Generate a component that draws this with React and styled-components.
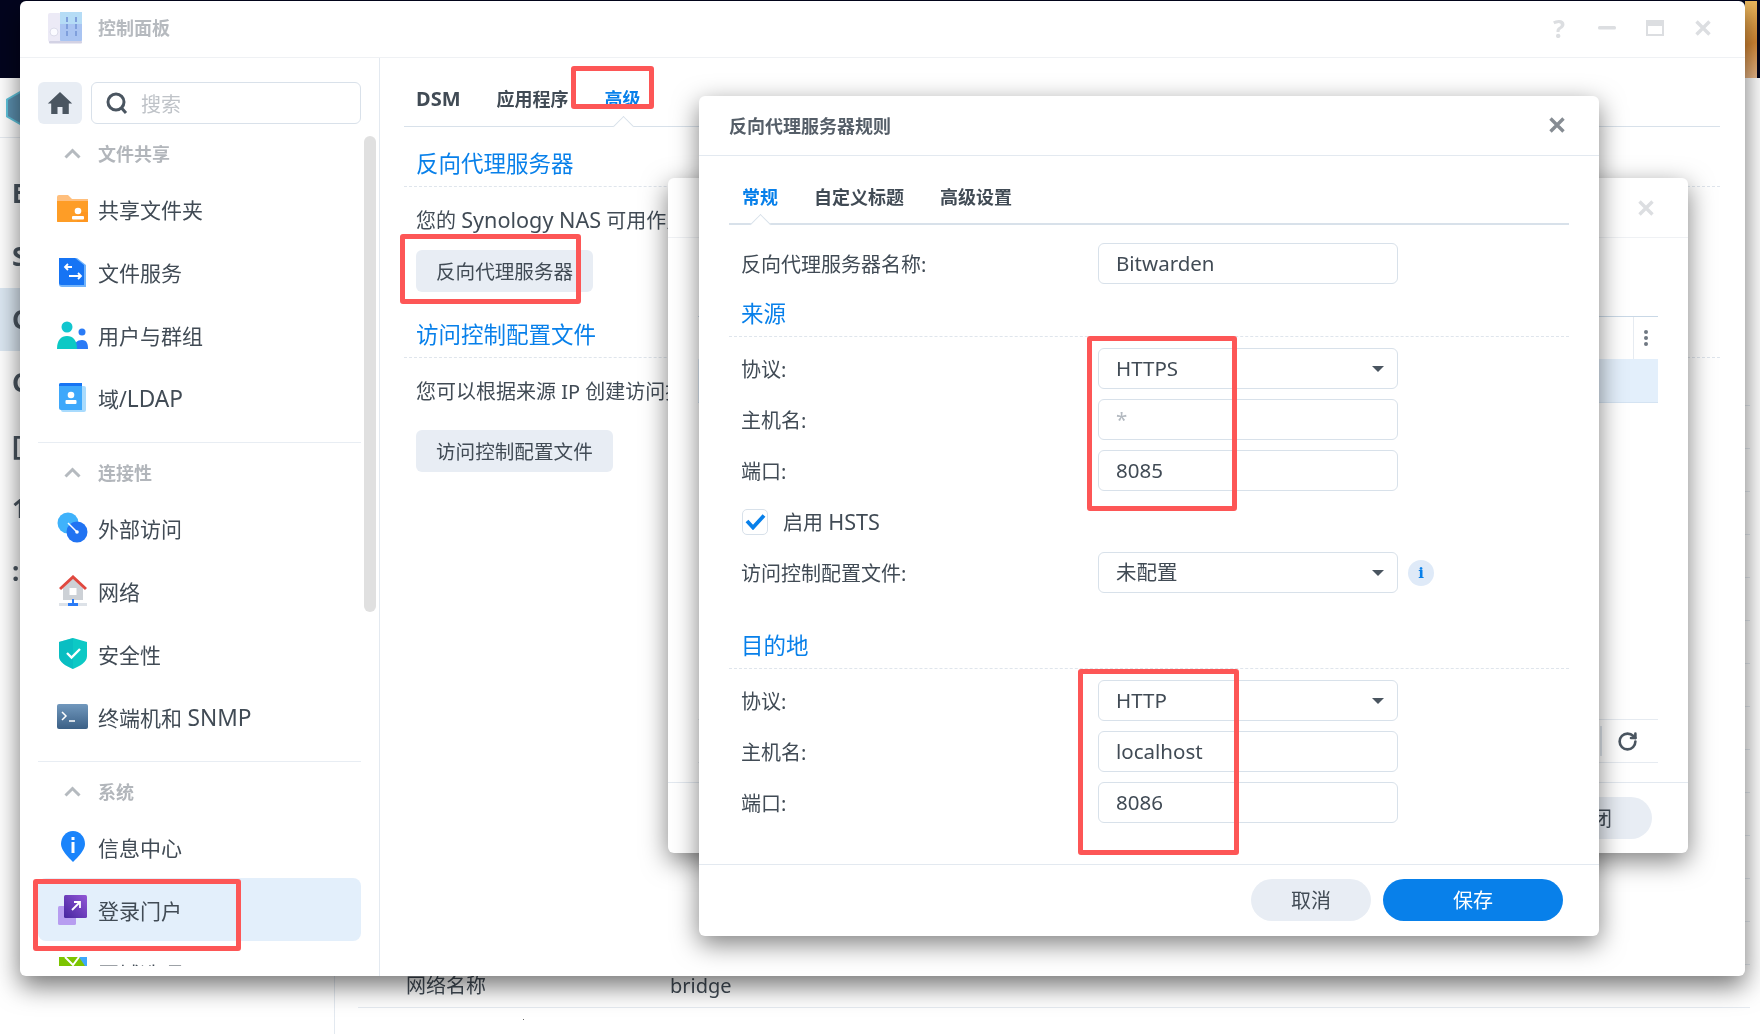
import React from 'react';
import styled, { createGlobalStyle, css } from 'styled-components';
import { RotateCw } from 'lucide-react';

const GlobalStyle = createGlobalStyle`
  html, body { margin: 0; padding: 0; background: #fff; }
  body {
    font-family: "Noto Sans", "Noto Sans CJK SC", sans-serif;
    color: #414b55;
  }
  * { box-sizing: border-box; }
`;

const Desktop = styled.div`
  position: relative;
  width: 1760px;
  height: 1034px;
  overflow: hidden;
  background: #03051e;
  filter: blur(0.35px);
`;

const Wallpaper = styled.div`
  position: absolute;
  left: 1745px;
  top: 1px;
  width: 12px;
  height: 77px;
  background: linear-gradient(160deg, #eebc62 0%, #d98a35 55%, #e9b98c 100%);
`;

/* latin runs are drawn a bit larger than the chinese around them */
const Latin = styled.span`
  font-size: 1.08em;
  line-height: 0;
`;

/* the app behind the control panel, only its edges show */
const BackApp = styled.div`
  position: absolute;
  left: 0;
  top: 78px;
  width: 1760px;
  height: 956px;
  background: #fff;
  display: flex;
`;

const BackSide = styled.div`
  width: 335px;
  border-right: 1px solid #e3e9f0;
  display: flex;
  flex-direction: column;
`;

const BackLogoRow = styled.div`
  height: 60px;
  border-bottom: 1px solid #e6ebf1;
  display: flex;
  align-items: center;
  padding-left: 4px;
`;

const BackSideItem = styled.div`
  height: 63px;
  padding-left: 12px;
  font-size: 26px;
  font-weight: 700;
  line-height: 63px;
  color: #4a5560;
  background: ${p => (p.$active ? '#dce8f3' : 'transparent')};
`;

const BackSideList = styled.div`
  margin-top: 24px;
`;

const BackMain = styled.div`
  flex: 1;
  padding: 285px 10px 0 23px;
`;

const BackRow = styled.div`
  height: 43px;
  border-bottom: 1px solid #e6ebf1;
  display: flex;
  align-items: center;
  font-size: 20px;
  line-height: 30px;
  padding-left: 48px;
`;

const BackRowKey = styled.span`
  width: 264px;
`;

const Speck = styled.div`
  position: absolute;
  left: 523px;
  top: 1019px;
  width: 1px;
  height: 1px;
  background: #666;
`;

/* control panel window */
const PanelWindow = styled.div`
  position: absolute;
  left: 20px;
  top: 1px;
  width: 1725px;
  height: 975px;
  background: #fff;
  border-radius: 6px;
  box-shadow: 0 10px 26px rgba(0, 0, 0, 0.55);
  display: flex;
  flex-direction: column;
`;

const TitleBar = styled.div`
  height: 57px;
  flex: none;
  border-bottom: 1px solid #eff1f4;
  display: flex;
  align-items: center;
  padding: 0 18px 2px 28px;
`;

const TitleText = styled.div`
  margin-left: 16px;
  font-size: 18px;
  line-height: 24px;
  font-weight: 700;
  color: #b6babf;
  flex: 1;
`;

const WindowControls = styled.div`
  display: flex;
  align-items: center;
`;

const ControlCell = styled.div`
  width: 48px;
  height: 30px;
  display: flex;
  align-items: center;
  justify-content: center;
  font-size: 25px;
  font-weight: 700;
  color: #dcdee1;
`;

const PanelBody = styled.div`
  flex: 1;
  min-height: 0;
  display: flex;
`;

const Sidebar = styled.div`
  position: relative;
  width: 360px;
  flex: none;
  border-right: 1px solid #e3e9f0;
  padding: 24px 18px 10px;
  display: flex;
  flex-direction: column;
`;

const SearchRow = styled.div`
  display: flex;
  gap: 9px;
  height: 42px;
  flex: none;
`;

const HomeButton = styled.div`
  width: 44px;
  background: #e8edf4;
  border-radius: 6px;
  display: flex;
  align-items: center;
  justify-content: center;
`;

const SearchBox = styled.div`
  flex: 1;
  border: 1px solid #d9e1ea;
  border-radius: 6px;
  display: flex;
  align-items: center;
  padding-left: 14px;
  gap: 13px;
  font-size: 20px;
  color: #bfc3c8;
`;

const NavList = styled.div`
  margin-top: 5px;
  flex: 1;
  min-height: 0;
  overflow: hidden;
`;

const NavGroup = styled.div`
  ${p => p.$divided && css`
    margin-top: 13px;
    border-top: 1px solid #e8edf3;
    padding-top: 5px;
  `}
`;

const GroupHeader = styled.div`
  height: 48px;
  display: flex;
  align-items: center;
  padding-left: 26px;
  gap: 17px;
  font-size: 18px;
  font-weight: 700;
  color: #b2b6bb;
`;

const NavItem = styled.div`
  height: 63px;
  border-radius: 8px;
  display: flex;
  align-items: center;
  padding-left: 19px;
  gap: 10px;
  font-size: 21px;
  line-height: 30px;
  white-space: pre;
  background: ${p => (p.$active ? '#e3effb' : 'transparent')};
`;

const NavLabel = styled.span`
  padding-top: 2px;
`;

const IconSlot = styled.span`
  width: 31px;
  height: 32px;
  flex: none;
  display: flex;
  align-items: center;
  justify-content: center;
`;

const ScrollThumb = styled.div`
  position: absolute;
  left: 344px;
  top: 78px;
  width: 12px;
  height: 476px;
  border-radius: 6px;
  background: #e0e0e0;
`;

const Content = styled.div`
  flex: 1;
  min-width: 0;
  padding: 0 25px 0 24px;
`;

const MainTabs = styled.div`
  height: 69px;
  padding: 12px 0 0 12px;
  border-bottom: 1px solid #d8e1ea;
  display: flex;
  gap: 36px;
`;

const notch = css`
  &::after {
    content: "";
    position: absolute;
    left: 50%;
    width: 14px;
    height: 14px;
    margin-left: -7px;
    background: #fff;
    border-top: 1px solid #d8e1ea;
    border-left: 1px solid #d8e1ea;
    transform: rotate(45deg);
  }
`;

const MainTab = styled.div`
  position: relative;
  display: flex;
  align-items: center;
  font-size: 18px;
  font-weight: 700;
  color: ${p => (p.$active ? '#0880ea' : '#414b55')};
  ${p => p.$active && notch}
  &::after { bottom: -8px; }
`;

const DsmLabel = styled.span`
  font-size: 20px;
`;

const SectionHead = styled.div`
  height: 60px;
  padding: 0 0 7px 12px;
  border-bottom: 1px dashed #dfe5ec;
  display: flex;
  align-items: flex-end;
  font-size: 22.5px;
  line-height: 30px;
  color: #0880ea;
  white-space: nowrap;
`;

const Blurb = styled.div`
  padding: 19px 0 0 12px;
  font-size: 20px;
  line-height: 30px;
  white-space: nowrap;
`;

const SoftButton = styled.div`
  display: inline-flex;
  align-items: center;
  height: 42px;
  margin: ${p => p.$top}px 0 6px 12px;
  padding: 0 20px 1px;
  border-radius: 6px;
  background: #e8edf4;
  font-size: 19.6px;
  white-space: nowrap;
  vertical-align: top;
`;

/* dialogs */
const dialog = css`
  position: absolute;
  background: #fff;
  border-radius: 6px;
  box-shadow: 0 8px 26px rgba(0, 0, 0, 0.5);
  display: flex;
  flex-direction: column;
`;

const BackDialog = styled.div`
  ${dialog}
  left: 668px;
  top: 178px;
  width: 1020px;
  height: 675px;
`;

const BackDialogHead = styled.div`
  height: 60px;
  flex: none;
  border-bottom: 1px solid #eff1f4;
  display: flex;
  align-items: center;
  justify-content: flex-end;
  padding-right: 34px;
`;

const BackDialogBody = styled.div`
  flex: 1;
  padding: 78px 30px 0;
  display: flex;
  flex-direction: column;
`;

const TableHead = styled.div`
  height: 43px;
  flex: none;
  border-top: 1px solid #c9d8e6;
  display: flex;
  justify-content: flex-end;
`;

const MenuCell = styled.div`
  width: 25px;
  border-left: 1px solid #e6ebf1;
  display: flex;
  flex-direction: column;
  align-items: center;
  justify-content: center;
  gap: 2px;
`;

const MenuDot = styled.i`
  width: 4px;
  height: 4px;
  border-radius: 50%;
  background: #6f7882;
`;

const SelectedRow = styled.div`
  height: 44px;
  flex: none;
  background: #e3effb;
  border-bottom: 1px solid #d4e3f2;
`;

const TableFill = styled.div`
  flex: 1;
`;

const PagerBar = styled.div`
  height: 44px;
  flex: none;
  border-top: 1px solid #e6ebf1;
  border-bottom: 1px solid #e6ebf1;
  display: flex;
  align-items: center;
  justify-content: flex-end;
  padding-right: 20px;
  gap: 15px;
  color: #4a5560;
`;

const PagerRule = styled.div`
  width: 2px;
  height: 30px;
  background: #dfe5ec;
`;

const BackDialogBodyEnd = styled.div`
  height: 19px;
  flex: none;
`;

const DialogFoot = styled.div`
  height: ${p => p.$h}px;
  flex: none;
  border-top: 1px solid #e3e9f0;
  display: flex;
  justify-content: flex-end;
  padding: 14px ${p => p.$right}px 0 0;
  gap: 12px;
`;

const PillButton = styled.div`
  width: ${p => p.$w}px;
  height: 42px;
  border-radius: 21px;
  display: flex;
  align-items: center;
  justify-content: center;
  font-size: 20px;
  padding-bottom: 2px;
  background: ${p => (p.$primary ? '#0880ea' : '#e8edf4')};
  color: ${p => (p.$primary ? '#fff' : '#414b55')};
`;

const RuleDialog = styled.div`
  ${dialog}
  left: 699px;
  top: 96px;
  width: 900px;
  height: 840px;
`;

const RuleHead = styled.div`
  height: 60px;
  flex: none;
  border-bottom: 1px solid #e3e9f0;
  display: flex;
  align-items: center;
  justify-content: space-between;
  padding: 0 34px 2px 30px;
  font-size: 18px;
  font-weight: 700;
  color: #555e68;
`;

const RuleBody = styled.div`
  flex: 1;
  padding: 0 30px;
`;

const RuleTabs = styled.div`
  height: 69px;
  padding: 12px 0 0 13px;
  border-bottom: 2px solid #d8e1ea;
  display: flex;
  gap: 36px;
  margin-bottom: 18px;
`;

const RuleTab = styled.div`
  position: relative;
  display: flex;
  align-items: center;
  font-size: 18px;
  font-weight: 700;
  color: ${p => (p.$active ? '#0880ea' : '#414b55')};
  ${p => p.$active && notch}
  &::after { bottom: -9px; }
`;

const FormRow = styled.div`
  height: 41px;
  margin-bottom: 10px;
  padding-left: 12px;
  display: flex;
  align-items: center;
  font-size: 20px;
  line-height: 30px;
`;

const FormLabel = styled.div`
  width: 357px;
  flex: none;
  padding-top: 3px;
`;

const CheckLabel = styled.span`
  padding-top: 2px;
`;

const Field = styled.div`
  position: relative;
  width: 300px;
  height: 41px;
  flex: none;
  border: 1px solid #d8e1ea;
  border-radius: 6px;
  padding: 0 0 2px 17px;
  display: flex;
  align-items: center;
  font-size: 20.5px;
  color: ${p => (p.$hint ? '#b3b9c0' : '#414b55')};
`;

const SelectField = styled(Field)`
  &::after {
    content: "";
    position: absolute;
    right: 13px;
    top: 17px;
    border-left: 6px solid transparent;
    border-right: 6px solid transparent;
    border-top: 6px solid #4a5560;
  }
`;

const FormHead = styled.div`
  height: 43px;
  margin: ${p => (p.$spaced ? '33px' : '0')} 0 11px;
  padding: 0 0 7px 12px;
  border-bottom: 1px dashed #dfe5ec;
  display: flex;
  align-items: flex-end;
  font-size: 22.5px;
  line-height: 30px;
  color: #0880ea;
`;

const CheckBox = styled.div`
  width: 26px;
  height: 26px;
  border: 1px solid #d8e1ea;
  border-radius: 5px;
  display: flex;
  align-items: center;
  justify-content: center;
  margin: 0 15px 0 1px;
`;

const InfoBadge = styled.div`
  width: 26px;
  height: 26px;
  margin-left: 10px;
  border-radius: 50%;
  background: #dfeaf8;
  display: flex;
  align-items: center;
  justify-content: center;
  font-family: "DejaVu Serif", serif;
  font-size: 15px;
  font-weight: 700;
  color: #0880ea;
`;

/* red marks somebody drew on the screenshot */
const RedMark = styled.div`
  position: absolute;
  left: ${p => p.$x}px;
  top: ${p => p.$y}px;
  width: ${p => p.$w}px;
  height: ${p => p.$h}px;
  border: 5px solid #fd5656;
  border-radius: 3px;
`;

const CrossIcon = ({ size = 16, color, weight = 3.4 }) => (
  <svg width={size} height={size} viewBox="0 0 16 16">
    <path d="M1.500 1.500l13 13M14.500 1.500l-13 13" stroke={color} strokeWidth={weight} fill="none" />
  </svg>
);

const ChevronUp = () => (
  <svg width="17" height="11" viewBox="0 0 17 11">
    <path d="M1.500 9.500l7-7 7 7" stroke="#b5babf" strokeWidth="3" fill="none" />
  </svg>
);

const PanelLogo = () => (
  <svg width="34" height="32" viewBox="0 0 34 32">
    <rect x="0" y="1" width="13" height="29" rx="2" fill="#eceaf6" />
    <circle cx="6" cy="20" r="4" fill="#fbfbff" stroke="#dcdcea" />
    <rect x="12" y="0" width="22" height="30" rx="2" fill="#a9c4f2" />
    <rect x="12" y="0" width="22" height="12" fill="#b5dcf6" />
    <path d="M19 5v21M28 5v21" stroke="#7f9fdc" strokeWidth="2" strokeDasharray="5 2" />
    <rect x="1" y="29" width="33" height="2.500" rx="1" fill="#d3d2e4" />
  </svg>
);

const HomeIcon = () => (
  <svg width="26" height="24" viewBox="0 0 26 24">
    <path d="M13 1L0.800 12.500h3.400V23h6.300v-7h5v7h6.300V12.500h3.400z" fill="#4a5560" />
  </svg>
);

const SearchIcon = () => (
  <svg width="22" height="23" viewBox="0 0 22 23">
    <circle cx="10" cy="10" r="8" stroke="#4a5560" strokeWidth="3" fill="none" />
    <path d="M15.500 16l4.500 5" stroke="#4a5560" strokeWidth="3" />
  </svg>
);

const FolderIcon = () => (
  <svg width="31" height="27" viewBox="0 0 31 27">
    <path d="M0 2a2 2 0 012-2h9l4 4h16v23H0z" fill="#ffbf7d" />
    <path d="M0 6h31v20a1 1 0 01-1 1H1a1 1 0 01-1-1z" fill="#fe9d26" />
    <path d="M20 17h11v10H20z" fill="#fe8f1c" opacity=".5" />
    <circle cx="21" cy="16" r="3.300" fill="#fff" />
    <rect x="15" y="21" width="12" height="3.500" rx="1" fill="#fff" />
  </svg>
);

const FileServiceIcon = () => (
  <svg width="28" height="30" viewBox="0 0 28 30">
    <path d="M0 1h18l9 7v22H3a3 3 0 01-3-3z" fill="#72b4fb" />
    <path d="M0 1h16l9 7v20H2a2 2 0 01-2-2z" fill="#1674f4" />
    <path d="M13 10H6m3-3l-3 3 3 3M10 19h12m-3-3l3 3-3 3" stroke="#fff" strokeWidth="1.800" fill="none" />
  </svg>
);

const UsersIcon = () => (
  <svg width="31" height="28" viewBox="0 0 31 28">
    <circle cx="25" cy="11" r="3.500" fill="#2a7bf6" />
    <path d="M17 28c0-6 3-9 8-9s6 4 6 9z" fill="#2a7bf6" />
    <circle cx="10" cy="6" r="5.500" fill="#12c6cf" />
    <path d="M0 28c0-9 4-13 10-13s10 4 10 13z" fill="#0cc9c5" />
  </svg>
);

const LdapIcon = () => (
  <svg width="27" height="29" viewBox="0 0 27 29">
    <rect x="2" y="3" width="25" height="26" rx="2" fill="#a9dbfd" />
    <path d="M0 2a2 2 0 012-2h21v27H2a2 2 0 01-2-2z" fill="#3ea8fb" />
    <path d="M0 2a2 2 0 012-2h21v3H0z" fill="#1674f4" />
    <circle cx="12" cy="12" r="3.300" fill="#fff" />
    <rect x="6.500" y="17" width="11" height="4" rx="1" fill="#fff" />
  </svg>
);

const ExternalIcon = () => (
  <svg width="31" height="31" viewBox="0 0 31 31">
    <circle cx="11" cy="11" r="10.500" fill="#3fb2fb" />
    <circle cx="20" cy="20" r="10.500" fill="#2173f2" />
    <path d="M11 11l9 9" stroke="#fff" strokeWidth="1.500" />
    <circle cx="20" cy="20" r="1.800" fill="#fff" />
  </svg>
);

const NetworkIcon = () => (
  <svg width="28" height="32" viewBox="0 0 28 32">
    <path d="M4 13L14 3l10 10v12H4z" fill="#cdd1d6" />
    <rect x="10.500" y="13" width="7" height="7" fill="#fff" />
    <path d="M1 14L14 2l13 12" stroke="#e0483f" strokeWidth="3" fill="none" />
    <rect x="0" y="28" width="28" height="3" fill="#dde2e8" />
    <path d="M13 24h2v4h4v3H9v-3h4z" fill="#2a7bf6" />
  </svg>
);

const ShieldIcon = () => (
  <svg width="28" height="31" viewBox="0 0 28 31">
    <path d="M14 0l14 4v14c0 6-7 10-14 13C7 28 0 24 0 18V4z" fill="#0cc9c5" />
    <path d="M14 0L0 4v14c0 6 7 10 14 13z" fill="#09b8c0" opacity=".6" />
    <path d="M8 15l4.500 4.500L21 11" stroke="#fff" strokeWidth="2.400" fill="none" />
  </svg>
);

const TerminalIcon = () => (
  <svg width="31" height="25" viewBox="0 0 31 25">
    <defs>
      <linearGradient id="termFill" x1="0" y1="0" x2="0" y2="1">
        <stop offset="0" stopColor="#7198bd" />
        <stop offset="1" stopColor="#3b6086" />
      </linearGradient>
    </defs>
    <rect width="31" height="25" rx="2" fill="url(#termFill)" />
    <path d="M5 8l4 4-4 4M12 17h6" stroke="#fff" strokeWidth="1.500" fill="none" />
  </svg>
);

const InfoPinIcon = () => (
  <svg width="24" height="31" viewBox="0 0 24 31">
    <path d="M12 0c7 0 12 6 12 13 0 6-7 13-12 18C7 26 0 19 0 13 0 6 5 0 12 0z" fill="#1a84fb" />
    <rect x="10.500" y="6" width="3" height="3" fill="#fff" />
    <rect x="10.500" y="11" width="3" height="11" fill="#fff" />
  </svg>
);

const PortalIcon = () => (
  <svg width="29" height="30" viewBox="0 0 29 30">
    <defs>
      <linearGradient id="portalFill" x1="1" y1="0" x2="0" y2="1">
        <stop offset="0" stopColor="#9257d6" />
        <stop offset="1" stopColor="#46259f" />
      </linearGradient>
    </defs>
    <rect x="0" y="11" width="18" height="19" rx="1.500" fill="#b79df0" />
    <rect x="6" y="0" width="23" height="23" rx="1.500" fill="url(#portalFill)" />
    <path d="M14 15l8-8m-6 0h6v6" stroke="#fff" strokeWidth="1.800" fill="none" />
  </svg>
);

const RegionIcon = () => (
  <svg width="28" height="32" viewBox="0 0 28 32">
    <rect width="28" height="32" fill="#7cc400" />
    <path d="M20 0h8v12z" fill="#3ea8fb" />
    <path d="M6 0l8 8 6-8" stroke="#fff" strokeWidth="2" fill="none" />
  </svg>
);

const CheckMark = () => (
  <svg width="21" height="17" viewBox="0 0 21 17">
    <path d="M2 8l6 6.500L19 2.500" stroke="#0880ea" strokeWidth="3.800" fill="none" />
  </svg>
);

const navGroups = [
  {
    title: '文件共享',
    items: [
      { id: 'share', label: '共享文件夹', icon: <FolderIcon /> },
      { id: 'files', label: '文件服务', icon: <FileServiceIcon /> },
      { id: 'users', label: '用户与群组', icon: <UsersIcon /> },
      { id: 'ldap', label: <>域/<Latin>LDAP</Latin></>, icon: <LdapIcon /> },
    ],
  },
  {
    title: '连接性',
    items: [
      { id: 'external', label: '外部访问', icon: <ExternalIcon /> },
      { id: 'network', label: '网络', icon: <NetworkIcon /> },
      { id: 'security', label: '安全性', icon: <ShieldIcon /> },
      { id: 'snmp', label: <>终端机和 <Latin>SNMP</Latin></>, icon: <TerminalIcon /> },
    ],
  },
  {
    title: '系统',
    items: [
      { id: 'info', label: '信息中心', icon: <InfoPinIcon /> },
      { id: 'portal', label: '登录门户', icon: <PortalIcon />, active: true },
      { id: 'region', label: '区域选项', icon: <RegionIcon /> },
    ],
  },
];

const redMarks = [
  { x: 571, y: 66, w: 83, h: 43 },
  { x: 400, y: 234, w: 181, h: 70 },
  { x: 33, y: 879, w: 208, h: 72 },
  { x: 1087, y: 336, w: 150, h: 175 },
  { x: 1078, y: 669, w: 161, h: 186 },
];

const backLetters = ['B', 'S', 'C', 'C', '[', '1', ':'];

const App = () => (
  <Desktop>
    <GlobalStyle />
    <Wallpaper />

    <BackApp>
      <BackSide>
        <BackLogoRow>
          <svg width="36" height="36" viewBox="0 0 36 36">
            <path d="M18 1l15 8.500v17L18 35 3 26.500v-17z" fill="#5b8fae" stroke="#5fc3dc" strokeWidth="2" />
          </svg>
        </BackLogoRow>
        <BackSideList>
          {backLetters.map((letter, i) => (
            <BackSideItem key={i} $active={i === 2}>{letter}</BackSideItem>
          ))}
        </BackSideList>
      </BackSide>
      <BackMain>
        {Array.from({ length: 14 }).map((_, i) => <BackRow key={i} />)}
        <BackRow>
          <BackRowKey>网络名称</BackRowKey>
          bridge
        </BackRow>
      </BackMain>
    </BackApp>
    <Speck />

    <PanelWindow>
      <TitleBar>
        <PanelLogo />
        <TitleText>控制面板</TitleText>
        <WindowControls>
          <ControlCell>?</ControlCell>
          <ControlCell>
            <svg width="18" height="4" viewBox="0 0 18 4"><rect width="18" height="3.500" rx="1.500" fill="#dcdee1" /></svg>
          </ControlCell>
          <ControlCell>
            <svg width="18" height="16" viewBox="0 0 18 16"><path d="M0 0h18v16H0zM2 6v8h14V6z" fill="#dcdee1" fillRule="evenodd" /></svg>
          </ControlCell>
          <ControlCell>
            <CrossIcon color="#dcdee1" />
          </ControlCell>
        </WindowControls>
      </TitleBar>
      <PanelBody>
        <Sidebar>
          <SearchRow>
            <HomeButton><HomeIcon /></HomeButton>
            <SearchBox>
              <SearchIcon />
              搜索
            </SearchBox>
          </SearchRow>
          <NavList>
            {navGroups.map((group, i) => (
              <NavGroup key={group.title} $divided={i > 0}>
                <GroupHeader>
                  <ChevronUp />
                  {group.title}
                </GroupHeader>
                {group.items.map(item => (
                  <NavItem key={item.id} $active={item.active}>
                    <IconSlot>{item.icon}</IconSlot>
                    <NavLabel>{item.label}</NavLabel>
                  </NavItem>
                ))}
              </NavGroup>
            ))}
          </NavList>
          <ScrollThumb />
        </Sidebar>
        <Content>
          <MainTabs>
            <MainTab><DsmLabel>DSM</DsmLabel></MainTab>
            <MainTab>应用程序</MainTab>
            <MainTab $active>高级</MainTab>
          </MainTabs>
          <SectionHead>反向代理服务器</SectionHead>
          <Blurb>您的 <Latin>Synology NAS</Latin> 可用作反向代理服务器</Blurb>
          <SoftButton $top={14}>反向代理服务器</SoftButton>
          <SectionHead>访问控制配置文件</SectionHead>
          <Blurb>您可以根据来源 IP 创建访问控制配置文件</Blurb>
          <SoftButton $top={23}>访问控制配置文件</SoftButton>
        </Content>
      </PanelBody>
    </PanelWindow>

    <BackDialog>
      <BackDialogHead>
        <CrossIcon color="#dcdee1" />
      </BackDialogHead>
      <BackDialogBody>
        <TableHead>
          <MenuCell>
            <MenuDot />
            <MenuDot />
            <MenuDot />
          </MenuCell>
        </TableHead>
        <SelectedRow />
        <TableFill />
        <PagerBar>
          <PagerRule />
          <RotateCw size={21} strokeWidth={3} />
        </PagerBar>
        <BackDialogBodyEnd />
      </BackDialogBody>
      <DialogFoot $h={71} $right={36}>
        <PillButton $w={120}>关闭</PillButton>
      </DialogFoot>
    </BackDialog>

    <RuleDialog>
      <RuleHead>
        反向代理服务器规则
        <CrossIcon color="#868c93" />
      </RuleHead>
      <RuleBody>
        <RuleTabs>
          <RuleTab $active>常规</RuleTab>
          <RuleTab>自定义标题</RuleTab>
          <RuleTab>高级设置</RuleTab>
        </RuleTabs>
        <FormRow>
          <FormLabel>反向代理服务器名称:</FormLabel>
          <Field>Bitwarden</Field>
        </FormRow>
        <FormHead>来源</FormHead>
        <FormRow>
          <FormLabel>协议:</FormLabel>
          <SelectField>HTTPS</SelectField>
        </FormRow>
        <FormRow>
          <FormLabel>主机名:</FormLabel>
          <Field $hint>*</Field>
        </FormRow>
        <FormRow>
          <FormLabel>端口:</FormLabel>
          <Field>8085</Field>
        </FormRow>
        <FormRow>
          <CheckBox><CheckMark /></CheckBox>
          <CheckLabel>启用 <Latin>HSTS</Latin></CheckLabel>
        </FormRow>
        <FormRow>
          <FormLabel>访问控制配置文件:</FormLabel>
          <SelectField>未配置</SelectField>
          <InfoBadge>i</InfoBadge>
        </FormRow>
        <FormHead $spaced>目的地</FormHead>
        <FormRow>
          <FormLabel>协议:</FormLabel>
          <SelectField>HTTP</SelectField>
        </FormRow>
        <FormRow>
          <FormLabel>主机名:</FormLabel>
          <Field>localhost</Field>
        </FormRow>
        <FormRow>
          <FormLabel>端口:</FormLabel>
          <Field>8086</Field>
        </FormRow>
      </RuleBody>
      <DialogFoot $h={72} $right={36}>
        <PillButton $w={120}>取消</PillButton>
        <PillButton $w={180} $primary>保存</PillButton>
      </DialogFoot>
    </RuleDialog>

    {redMarks.map(mark => (
      <RedMark key={`${mark.x}-${mark.y}`} $x={mark.x} $y={mark.y} $w={mark.w} $h={mark.h} />
    ))}
  </Desktop>
);

export default App;
